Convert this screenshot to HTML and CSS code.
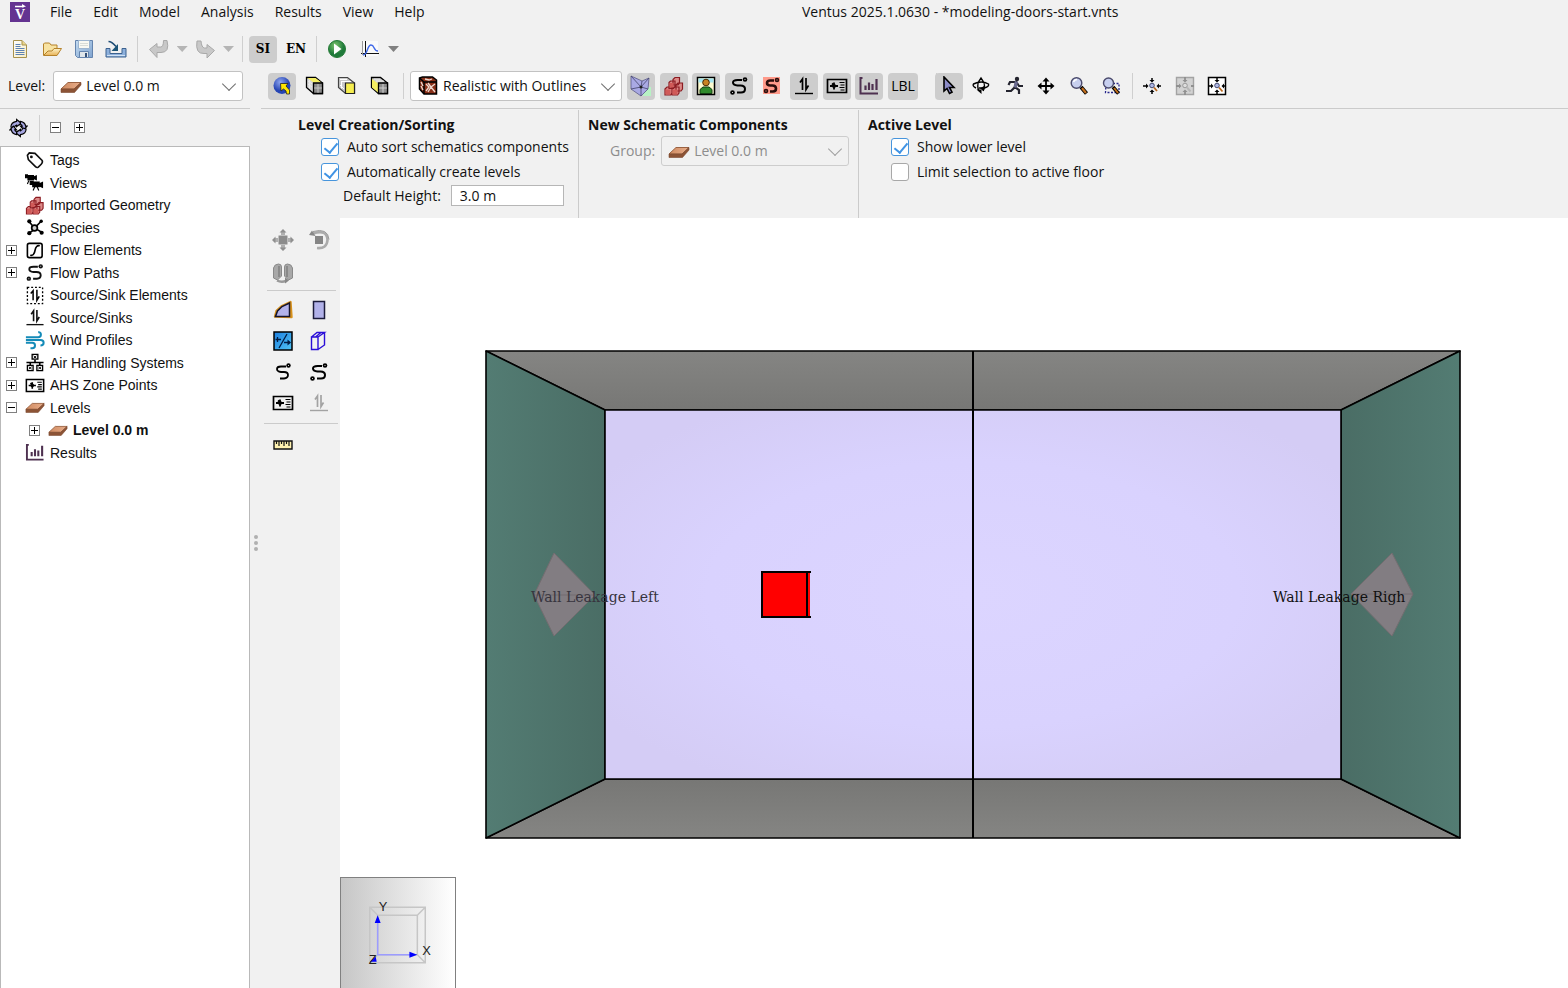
FILE: index.html
```html
<!DOCTYPE html>
<html lang="en">
<head>
<meta charset="utf-8">
<title>Ventus 2025.1.0630 - *modeling-doors-start.vnts</title>
<link rel="stylesheet" href="styles.css">
</head>
<body>
<svg class="sprite" aria-hidden="true">
  <defs>
    <linearGradient id="gPaper" x2="1" y2="1"><stop offset="0" stop-color="#fff"/><stop offset="1" stop-color="#f6ecc4"/></linearGradient>
    <linearGradient id="gFolder" x2="0" y2="1"><stop offset="0" stop-color="#fdf3c8"/><stop offset="1" stop-color="#e8b256"/></linearGradient>
    <linearGradient id="gBlue" x2="1" y2="1"><stop offset="0" stop-color="#c4dcf2"/><stop offset="1" stop-color="#7fa3cf"/></linearGradient>
    <linearGradient id="gWin" x2="1" y2="1"><stop offset="0" stop-color="#1c7fe0"/><stop offset="1" stop-color="#52c4f4"/></linearGradient>
    <linearGradient id="gSlab" x2="1"><stop offset="0" stop-color="#cf8a60"/><stop offset="1" stop-color="#e8ae8b"/></linearGradient>
    <radialGradient id="gBall" cx=".4" cy=".3"><stop offset="0" stop-color="#8fa6ee"/><stop offset="1" stop-color="#2645b4"/></radialGradient>
    <radialGradient id="gRun" cx=".4" cy=".3"><stop offset="0" stop-color="#7cc46c"/><stop offset="1" stop-color="#1f7a3a"/></radialGradient>
  </defs>
  <symbol id="new" viewBox="0 0 20 20"><path d="M3.500 1.500h8.500l4.500 4.500v12.500h-13z" fill="url(#gPaper)" stroke="#a8924c"/><path d="M12 1.500v4.500h4.500" fill="#ecd68a" stroke="#a8924c"/><path d="M5.500 5.500h5M5.500 7.500h5M5.500 9.500h9M5.500 11.500h9M5.500 13.500h9M5.500 15.500h9" stroke="#5d82b4"/></symbol>
  <symbol id="open" viewBox="0 0 20 20"><path d="M1.500 16V5l1-1h5l1.500 2h6v3" fill="#f8e3a2" stroke="#b5822a"/><path d="M1.500 16.500L6 12h4l2-2.500h7.500l-4.500 7z" fill="url(#gFolder)" stroke="#b5822a"/></symbol>
  <symbol id="save" viewBox="0 0 20 20"><path d="M1.500 1.500h17v17h-15l-2-2z" fill="url(#gBlue)" stroke="#6484ae"/><path d="M4.500 1.500h11v8h-11z" fill="#f8f8f2" stroke="#9cb4cf"/><path d="M6 4.500h8M6 6.500h8" stroke="#d8dcd8"/><path d="M5.500 12.500h9v6h-9z" fill="#dfe5ea" stroke="#6484ae"/><path d="M11 14h2v4h-2z" fill="#345078"/></symbol>
  <symbol id="import" viewBox="0 0 22 20"><path d="M1 9.500h4v5h12v-5h4v8.500H1z" fill="#8db0dc" stroke="#3c628f"/><path d="M2 16.500h18" stroke="#d0e2f4"/><path d="M3.500 2.500c3 0 5 2 7.500 5" fill="none" stroke="#1d4b74" stroke-width="1.500"/><path d="M13 5v7H6.500z" fill="#1d5577"/></symbol>
  <symbol id="undo" viewBox="0 0 20 20"><path d="M.5 10.500L8 4.500v3.500h3.500q3 0 3-6.500h3.500q3 12-6 12H8v5z" fill="#c8c8c8" stroke="#a9a9a9"/></symbol>
  <symbol id="redo" viewBox="0 0 20 20"><path d="M19.500 11.500L12 5.500v3.500H9.500q-3-.5-3.500-7H2q-2 13 7 12.500h3v4.500z" fill="#c8c8c8" stroke="#a9a9a9"/></symbol>
  <symbol id="run" viewBox="0 0 20 20"><circle cx="10" cy="10" r="8.500" fill="url(#gRun)" stroke="#247a36"/><path d="M7 4.500l7.500 5.500L7 15.500z" fill="#fff"/></symbol>
  <symbol id="graph" viewBox="0 0 20 20"><path d="M3 2h15v15H3z" fill="#fafafa"/><path d="M5.500 2v16M1 14.500h18" stroke="#111"/><path d="M2.500 2v14" stroke="#999"/><path d="M3 16c5 0 4-10 8-10s2 6 7 6" fill="none" stroke="#3f68e8" stroke-width="1.400"/></symbol>
  <symbol id="slab" viewBox="0 0 22 12"><path d="M1 8L8 1.500h13L14 8z" fill="url(#gSlab)" stroke="#9a6242"/><path d="M1 8h13l7-6.500v2.500L14.500 11.500H1z" fill="#8c5335" stroke="#7c4a30" stroke-width=".6"/></symbol>

  <symbol id="ball" viewBox="0 0 20 20"><circle cx="10" cy="9.500" r="8.500" fill="url(#gBall)"/><path d="M8.500 7.500h7.500l-2 2.500 3.500 4v4h-3l-.5-3-2.500-2-2.500 2z" fill="#ffe600" stroke="#222" stroke-width=".8"/></symbol>
  <symbol id="cubeTop" viewBox="0 0 20 20"><path d="M1.500 1.500h9l7 5.500v10.500h-9l-7-6z" fill="#d8d8d8" stroke="#000" stroke-width="1.300"/><path d="M2.500 2h8l6 4.500H8.500z" fill="#f4ee62"/><path d="M8.500 7h9v10.500h-9z" fill="#8a8a8a" stroke="#000" stroke-width="1.300"/><path d="M3 5l4 3M3 8l4 3M4.500 4v8.500M13 8v9M9 12h8" stroke="#fff" opacity=".5"/></symbol>
  <symbol id="cubeFront" viewBox="0 0 20 20"><path d="M1.500 1.500h9l7 5.500v10.500h-9l-7-6z" fill="#cacaca" stroke="#444" stroke-width="1.200"/><path d="M8.500 7h9v10.500h-9z" fill="#f6ee50" stroke="#222" stroke-width="1.200"/><path d="M3 3.500h7M5 5.500h9M3 9l4 4M4.500 5v7.500" stroke="#fff"/></symbol>
  <symbol id="cubeSide" viewBox="0 0 20 20"><path d="M1.500 1.500h9l7 5.500v10.500h-9l-7-6z" fill="#d0d0d0" stroke="#000" stroke-width="1.300"/><path d="M2 3l6 4.500v9l-6-5z" fill="#f4ee62"/><path d="M8.500 7h9v10.500h-9z" fill="#8c8c8c" stroke="#000" stroke-width="1.300"/><path d="M4 3h6M6 5h8M13 8v9M9 12h8" stroke="#fff" opacity=".6"/></symbol>
  <symbol id="cubeReal" viewBox="0 0 20 20"><path d="M1.500 2l3-1h10l4 3v14H6l-4.500-5z" fill="#8a3018" stroke="#000" stroke-width="1.500"/><path d="M1.500 2L6 6h12M6 6v12" fill="none" stroke="#000" stroke-width="1.500"/><path d="M8 8l3 3-3 4M10 7l3 4 4-3M13 11l-3 5M13 11l4 5M7 3l4 1 3-1M3 6l2 4M3 10l2 4" fill="none" stroke="#eed9cf" stroke-width="1.300"/></symbol>

  <symbol id="mesh" viewBox="0 0 22 22"><path d="M12 12h9v9h-8z" fill="#b8f2c4"/><path d="M1 1l11 5 7-3-1 11-7 7L1 14z" fill="#a9a9e4" stroke="#5a5a86" stroke-width=".8"/><path d="M1 1l10 11 8-9M1 14l10-2 7 2M11 12v9M12 6l-1 6" fill="none" stroke="#44446a" stroke-width=".8"/><circle cx="11" cy="12" r="1.500" fill="#222"/></symbol>
  <symbol id="blocks" viewBox="0 0 20 20"><g fill="#dc8a88" stroke="#8c1c22" stroke-width="1.200"><path d="M1 13l2-2h5v6l-1.500 2H1zM8 13l2-2h5v6l-1.500 2H8zM12 9l2-2h4.500v6L17 15h-5zM5 6.500L6.500 5H11v6l-1.500 1.500H5zM9 3.500L11 1.500h4.500V7L14 9H9z"/></g><path d="M1.500 13.500h5v5h-5zM8.500 13.500h5v5h-5zM5.500 7h4v4.500h-4z" fill="#d05a58"/></symbol>
  <symbol id="person" viewBox="0 0 20 20"><path d="M1.500 1.500h17v17h-17z" fill="#fdfbd0" stroke="#000" stroke-width="1.500"/><path d="M2.500 2.500h15v4h-15z" fill="#a4e6f2"/><circle cx="10" cy="6.500" r="3.300" fill="#c98322" stroke="#4a2a04"/><path d="M4 17.500v-4l3-2.500h6l3 2.500v4z" fill="#2f8a2b" stroke="#143c12"/></symbol>
  <symbol id="path2" viewBox="0 0 20 20"><path d="M13 4H8.500Q4 4 4 6.500T8.500 9.500h3q4.500 0 4.500 3.500t-4 3.500H8" fill="none" stroke="currentColor" stroke-width="2"/><circle cx="16" cy="3.500" r="2.300" fill="currentColor"/><circle cx="3.500" cy="16.500" r="2.300" fill="currentColor"/><path d="M15.500 3h1v1h-1zM3 16h1v1H3z" fill="#ccc"/></symbol>
  <symbol id="path1" viewBox="0 0 20 20"><path d="M13 4.500H8q-4 0-4 2.500t4 3h3q4 0 4 3t-4 3.500H7" fill="none" stroke="#000" stroke-width="1.800"/><circle cx="15.500" cy="3.500" r="2.200" fill="#000"/><path d="M15 3h1v1h-1z" fill="#ccc"/></symbol>
  <symbol id="pathRed" viewBox="0 0 20 20"><path d="M1 1h17v17H1z" fill="#ff9a8a"/><path d="M12 4.500H8.500q-3.500 0-3.500 2.500t3.500 2.500h2q3.500 0 3.500 3t-3 3H8" fill="none" stroke="#2a0d0b" stroke-width="2.600"/><circle cx="15" cy="4" r="2.300" fill="#2a0d0b"/><circle cx="4" cy="15" r="2.300" fill="#2a0d0b"/><path d="M14.500 3.500h1v1h-1zM3.500 14.500h1v1h-1z" fill="#ff9a8a"/></symbol>
  <symbol id="sink" viewBox="0 0 20 20"><path d="M1 17.500h18" stroke="currentColor" stroke-width="1.400"/><path d="M8.500 14V3L6 6.500M12 2v11.500l2.500-4" fill="none" stroke="currentColor" stroke-width="1.700"/></symbol>
  <symbol id="sinkBox" viewBox="0 0 20 20"><path d="M2 1.500h16v17H2z" fill="none" stroke="#000" stroke-width="1.400" stroke-dasharray="2 2"/><path d="M8 15V5L5.500 8M12 4v11l2.500-4" fill="none" stroke="#000" stroke-width="1.600"/></symbol>
  <symbol id="ahs" viewBox="0 0 22 18"><path d="M1.500 2.500h19v13h-19z" fill="none" stroke="#000" stroke-width="1.700"/><path d="M4 9h8M8 5.500v7M6 6.500l3 2.500" stroke="#000" stroke-width="1.800"/><circle cx="8" cy="9" r="2" fill="#000"/><path d="M13.500 5.500h5M14.500 8h4M13.500 10.500h5M14.500 13h4" stroke="#000" stroke-width="1.200"/></symbol>
  <symbol id="bars" viewBox="0 0 20 20"><path d="M3.500 2H1.500v15.500H19" fill="none" stroke="#4e3150" stroke-width="2"/><path d="M6.500 14V9.500M10 14V6.500M13.500 14V8M17.500 14V3" stroke="#4e3150" stroke-width="2.200"/></symbol>

  <symbol id="pointer" viewBox="0 0 20 20"><path d="M5 1v14l3-2.500 2.500 5 2.500-1.300-2.500-4.700H15z" fill="#8c8cc8" stroke="#000" stroke-width="1.600"/></symbol>
  <symbol id="orbit" viewBox="0 0 20 20"><g fill="none" stroke="#000" stroke-width="1.400"><path d="M8 15Q5.500 10 8 5l2-3 2 3q3 5 0 10M5 12Q1 10 2.500 8q8-4 15 0 1 2.500-4 4H8"/></g><path d="M5.500 13.500h5V18zM13 10v5l-4-2.500z" fill="#000"/></symbol>
  <symbol id="walk" viewBox="0 0 20 20"><path d="M12.500 5l-1.500 6 4 3v4M11 11l-4 4H2M11 6H6L4.500 9M13 7l2 3h4" fill="none" stroke="#23232e" stroke-width="2.200"/><path d="M12.500 5.500l-1.500 6" stroke="#6b6b90" stroke-width="3.200"/><circle cx="13" cy="3" r="2.200" fill="#23232e"/></symbol>
  <symbol id="pan" viewBox="0 0 20 20"><path d="M10 3v14M3 10h14" stroke="#000" stroke-width="1.800"/><path d="M10 1.500l3.500 4h-7zM10 18.500l3.500-4h-7zM1.500 10l4-3.500v7zM18.500 10l-4-3.500v7z" fill="#000"/></symbol>
  <symbol id="zoom" viewBox="0 0 20 20"><path d="M12 11l5.500 6.500" stroke="#000" stroke-width="4"/><path d="M13 12l4 5" stroke="#c4701e" stroke-width="2.200"/><circle cx="7.500" cy="7" r="5.300" fill="#c7cfef" stroke="#4a4a6c" stroke-width="1.400"/><path d="M4.500 6q1-2.500 3.500-2.500" fill="none" stroke="#fff" stroke-width="1.500"/></symbol>
  <symbol id="zoomBox" viewBox="0 0 20 20"><path d="M5 7.500h13v9H4.500z" fill="none" stroke="#26268c" stroke-width="1.300" stroke-dasharray="2 1.500"/><path d="M12 11l5.500 6.500" stroke="#000" stroke-width="3.600"/><path d="M13 12l4 5" stroke="#c4701e" stroke-width="2"/><circle cx="7.500" cy="7" r="5" fill="#c7cfef" stroke="#4a4a6c" stroke-width="1.400"/></symbol>
  <symbol id="fit" viewBox="0 0 20 20"><path d="M10 2v3M10 15v3M1 10h4M16 10h3" stroke="#000" stroke-width="1.500"/><path d="M10 6.500L7.500 4h5zM10 13.500L7.500 16h5zM6.500 10L4 7.500v5zM14.500 10L17 7.500v5z" fill="#000"/><circle cx="10" cy="9.500" r="2.300" fill="#b0b8e4" stroke="#444a70"/><path d="M12 11.500l3 3.500" stroke="#b8661c" stroke-width="1.800"/></symbol>
  <symbol id="fitBox" viewBox="0 0 20 20"><path d="M1.500 1.500h17v17h-17z" fill="#fff" stroke="#000" stroke-width="1.500"/><path d="M10 1v4M10 15v4M1 10h4M16 10h3" stroke="#000" stroke-width="1.500"/><path d="M10 6.500L7.500 4h5zM10 13.500L7.500 16h5zM6.500 10L4 7.500v5zM14.500 10L17 7.500v5z" fill="#000"/><circle cx="10" cy="9.500" r="2.300" fill="#b0b8e4" stroke="#444a70"/><path d="M12 11.500l3.500 4" stroke="#b8661c" stroke-width="1.800"/></symbol>
  <symbol id="fitOff" viewBox="0 0 20 20"><path d="M1.500 1.500h17v17h-17z" fill="#d2d2d2" stroke="#a3a3a3" stroke-width="1.400"/><path d="M10 1v4M10 15v4M1 10h4M16 10h3" stroke="#909090" stroke-width="1.800"/><path d="M10 6.500L7.500 4h5zM10 13.500L7.500 16h5zM6.500 10L4 7.500v5z" fill="#909090"/><circle cx="10" cy="9.500" r="2.300" fill="#ddd" stroke="#999"/><path d="M12 11.500l3.500 4" stroke="#b8b8b8" stroke-width="2"/></symbol>

  <symbol id="sync" viewBox="0 0 20 20"><path d="M2 9q0-5 6-6V1l5 4-5 3.500V7q-2 .5-2.500 3z" fill="#a6a6e0" stroke="#000" stroke-width="1.200"/><path d="M12 3q5 1 5.500 5H19l-3.500 4L12 8h2q-.5-1.500-2-2z" fill="#a6a6e0" stroke="#000" stroke-width="1.200"/><path d="M18 11q0 5-6 6v2l-5-4 5-3.500V13q2-.5 2.500-3z" fill="#a6a6e0" stroke="#000" stroke-width="1.200"/><path d="M8 17q-5-1-5.500-5H1l3.500-4L8 12H6q.5 1.500 2 2z" fill="#a6a6e0" stroke="#000" stroke-width="1.200"/></symbol>
  <symbol id="tag" viewBox="0 0 20 20"><path d="M2 4.500L4 2l6 .5 7.500 7.500q1 1.500-1 4l-3 3q-1.500 1-3-.5L3 9z" fill="#fff" stroke="#111" stroke-width="1.700"/><circle cx="6.200" cy="6.200" r="1.500" fill="#111"/></symbol>
  <symbol id="cams" viewBox="0 0 20 20"><path d="M2 2h7v1.500l3-1.500v6l-3-1.500V8H2zM7 9h8v1.500l3.500-1.500v7L15 14.500V15H7z" fill="#000"/><path d="M0 2h2v3H0zM5 9h3v3H5zM3.500 8L2 11.500M10 14l-2 4.500M12 14l2 4.500" stroke="#000" stroke-width="1.200"/></symbol>
  <symbol id="species" viewBox="0 0 20 20"><path d="M4 4l4 5M16 4l-4 4M4 16l4-3M12 12l5 3" stroke="#000" stroke-width="1.700"/><circle cx="9.500" cy="10.500" r="3" fill="#ccc" stroke="#000" stroke-width="1.800"/><circle cx="4" cy="3.500" r="2.200"/><circle cx="16.500" cy="3.500" r="1.800"/><circle cx="4" cy="16" r="2.200"/><circle cx="17" cy="15.500" r="2.200"/></symbol>
  <symbol id="flowEl" viewBox="0 0 20 20"><rect x="2" y="2.500" width="15.500" height="15" rx="2" fill="#fff" stroke="#000" stroke-width="1.700"/><path d="M5 15q4 1 5-5t5-5" fill="none" stroke="#000" stroke-width="1.700"/></symbol>
  <symbol id="wind" viewBox="0 0 22 20"><path d="M1 6.500h13.500q3 0 3-3T14.500 1M1 9.500h16q3.500 0 3.500 3t-3.500 3M1 12.500h7q3 0 3 3T8 18.500H6" fill="none" stroke="#148bb8" stroke-width="2.200"/></symbol>
  <symbol id="net" viewBox="0 0 20 20"><path d="M1 10h18M10 7v3M5 10v3M15 10v3" stroke="#000" stroke-width="1.700"/><g fill="#fff" stroke="#000" stroke-width="1.400"><path d="M7 1.500h6v5H7zM2 13h6v5.500H2zM12 13h6v5.500h-6z"/><path d="M8.500 3l3 2.500M11.500 3l-3 2.500M3.500 14.500l3 2.500M6.500 14.500l-3 2.500M13.500 14.500l3 2.500M16.500 14.500l-3 2.500" stroke-width="1"/></g></symbol>

  <symbol id="move" viewBox="0 0 22 22"><path d="M6.500 6.500h9v9h-9z" fill="#8c8c8c"/><path d="M9 2h4v4H9zM9 16h4v4H9zM2 9h4v4H2zM16 9h4v4h-4z" fill="#b0b0b0"/><path d="M11 0l3.500 3.500h-7zM11 22l3.500-3.500h-7zM0 11l3.500-3.500v7zM22 11l-3.500-3.500v7z" fill="#909090"/></symbol>
  <symbol id="rotate" viewBox="0 0 22 22"><path d="M7 7h8v8H7z" fill="#858585"/><path d="M5 4.500q14-4.500 14.500 6.500Q19 20 9 19" fill="none" stroke="#ababab" stroke-width="2.600"/><path d="M5 2.500q15-4 16 8" fill="none" stroke="#999"/><path d="M1 6l3-4.500L7.500 7z" fill="#888"/></symbol>
  <symbol id="mirror" viewBox="0 0 22 22"><path d="M1.500 16V6q1-4 5-4 3 0 3 3v9l-4 4zM20.500 16V6q-1-4-5-4-3 0-3 3v9l4 4z" fill="#a8a8a8" stroke="#8a8a8a"/><path d="M7 4v11M15 4v11" stroke="#808080" stroke-width="1.500"/><path d="M5 18.500q4 2 9 .5" fill="none" stroke="#999" stroke-width="2.500"/><path d="M13 15.500l4 3-4 3z" fill="#888"/></symbol>
  <symbol id="poly" viewBox="0 0 20 20"><path d="M2 16.500L3.500 11 9 6l8.500-4 1 15z" fill="#aeaee6" stroke="#d8921c" stroke-width="2.400" stroke-linejoin="round"/><path d="M2.500 16.500L4.500 11 9 6.500 16.500 3v13.500z" fill="#b2b2ea" stroke="#14142c" stroke-width="1.500"/></symbol>
  <symbol id="rect" viewBox="0 0 20 20"><path d="M4.500 1.500h11v17h-11z" fill="#b2b2ea" stroke="#1c1c3c" stroke-width="1.500"/></symbol>
  <symbol id="opening" viewBox="0 0 20 20"><path d="M1 1h18v18H1z" fill="url(#gWin)" stroke="#000" stroke-width="1.500"/><path d="M6 17L14 3M2.500 8.500H8M4.500 6v5M11 11.500h6" stroke="#001c44" stroke-width="1.300"/><path d="M14.500 8.500L18 11.500l-3.500 3z" fill="#001c44"/></symbol>
  <symbol id="door" viewBox="0 0 20 20"><path d="M2.500 6h6.500v12.500H2.500zM2.500 6L8 1.500h7.500L9 6M15.500 1.500V14L9 18.500M6.500 6L12 1.500" fill="none" stroke="#2a0ed8" stroke-width="1.400"/></symbol>
  <symbol id="ruler" viewBox="0 0 20 10"><path d="M1 1h18v8H1z" fill="#fff2b0" stroke="#111" stroke-width="1.400"/><path d="M3.500 1v3M6 1v5M8.500 1v3M11 1v5M13.500 1v3M16 1v5" stroke="#111" stroke-width="1.200"/></symbol>
</svg>

<header class="menubar">
  <svg class="logo" viewBox="0 0 20 20" role="img" aria-label="Ventus"><path d="M0 0h20v20H0z" fill="#643391"/><path d="M5 4.500h9" stroke="#fff" stroke-width="1.500"/><path d="M12 2l4 2.500-4 1z" fill="#fff"/><text class="logo-letter" x="10" y="17" text-anchor="middle">V</text></svg>
  <nav class="menus">
    <button>File</button><button>Edit</button><button>Model</button><button>Analysis</button><button>Results</button><button>View</button><button>Help</button>
  </nav>
  <h1 class="title">Ventus 2025.1.0630 - *modeling-doors-start.vnts</h1>
</header>

<div class="toolbar main-tools" role="toolbar" aria-label="Main">
  <div class="group file-group">
    <button class="tool" aria-label="New"><svg><use href="#new"/></svg></button>
    <button class="tool" aria-label="Open"><svg><use href="#open"/></svg></button>
    <button class="tool" aria-label="Save"><svg><use href="#save"/></svg></button>
    <button class="tool" aria-label="Import"><svg class="wide"><use href="#import"/></svg></button>
  </div>
  <span class="sep"></span>
  <div class="group undo-group">
    <button class="tool" aria-label="Undo" disabled><svg><use href="#undo"/></svg></button>
    <button class="caret faint" aria-label="Undo history" disabled></button>
    <button class="tool" aria-label="Redo" disabled><svg><use href="#redo"/></svg></button>
    <button class="caret faint" aria-label="Redo history" disabled></button>
  </div>
  <span class="sep"></span>
  <div class="group unit-group">
    <button class="tool unit on">SI</button>
    <button class="tool unit">EN</button>
  </div>
  <span class="sep"></span>
  <div class="group run-group">
    <button class="tool" aria-label="Run"><svg><use href="#run"/></svg></button>
    <button class="tool" aria-label="Plots"><svg><use href="#graph"/></svg></button>
    <button class="caret" aria-label="More plots"></button>
  </div>
</div>

<div class="toolbar view-tools" role="toolbar" aria-label="View">
  <div class="level-pick">
    <label for="level">Level:</label>
    <span class="combo level-combo"><svg class="slab"><use href="#slab"/></svg><select id="level"><option>Level 0.0 m</option></select></span>
  </div>
  <div class="group cube-group">
    <button class="tool on" aria-label="Orbit selection"><svg><use href="#ball"/></svg></button>
    <button class="tool" aria-label="Top view"><svg><use href="#cubeTop"/></svg></button>
    <button class="tool" aria-label="Front view"><svg><use href="#cubeFront"/></svg></button>
    <button class="tool" aria-label="Side view"><svg><use href="#cubeSide"/></svg></button>
  </div>
  <span class="sep"></span>
  <span class="combo render-combo"><svg class="combo-icon"><use href="#cubeReal"/></svg><select aria-label="Render mode"><option>Realistic with Outlines</option></select></span>
  <div class="group show-group">
    <button class="tool on" aria-label="Show zones"><svg class="wide tall"><use href="#mesh"/></svg></button>
    <button class="tool on" aria-label="Show geometry"><svg><use href="#blocks"/></svg></button>
    <button class="tool on" aria-label="Show occupants"><svg><use href="#person"/></svg></button>
    <button class="tool on" aria-label="Show flow paths"><svg><use href="#path2"/></svg></button>
    <button class="tool" aria-label="Show flow path errors"><svg><use href="#pathRed"/></svg></button>
    <button class="tool on" aria-label="Show sources"><svg><use href="#sink"/></svg></button>
    <button class="tool on" aria-label="Show AHS points"><svg class="wide"><use href="#ahs"/></svg></button>
    <button class="tool on" aria-label="Show results"><svg><use href="#bars"/></svg></button>
    <button class="tool on lbl">LBL</button>
  </div>
  <span class="sep"></span>
  <div class="group nav-group">
    <button class="tool on" aria-label="Select"><svg><use href="#pointer"/></svg></button>
    <button class="tool" aria-label="Orbit"><svg><use href="#orbit"/></svg></button>
    <button class="tool" aria-label="Walk"><svg><use href="#walk"/></svg></button>
    <button class="tool" aria-label="Pan"><svg><use href="#pan"/></svg></button>
    <button class="tool" aria-label="Zoom"><svg><use href="#zoom"/></svg></button>
    <button class="tool" aria-label="Zoom box"><svg><use href="#zoomBox"/></svg></button>
  </div>
  <span class="sep"></span>
  <div class="group fit-group">
    <button class="tool" aria-label="Fit all"><svg><use href="#fit"/></svg></button>
    <button class="tool" aria-label="Fit selection" disabled><svg><use href="#fitOff"/></svg></button>
    <button class="tool" aria-label="Fit view"><svg><use href="#fitBox"/></svg></button>
  </div>
</div>

<div class="workspace">
  <aside class="sidebar">
    <div class="tree-tools">
      <button class="sync" aria-label="Synchronize"><svg><use href="#sync"/></svg></button>
      <span class="sep"></span>
      <button class="toggle" aria-label="Collapse all"></button>
      <button class="toggle plus" aria-label="Expand all"></button>
    </div>
    <div class="tree-box">
      <ul class="tree" role="tree">
        <li role="treeitem"><span class="slot"></span><svg><use href="#tag"/></svg>Tags</li>
        <li role="treeitem"><span class="slot"></span><svg><use href="#cams"/></svg>Views</li>
        <li role="treeitem"><span class="slot"></span><svg><use href="#blocks"/></svg>Imported Geometry</li>
        <li role="treeitem"><span class="slot"></span><svg><use href="#species"/></svg>Species</li>
        <li role="treeitem"><button class="toggle plus" aria-label="Expand"></button><svg><use href="#flowEl"/></svg>Flow Elements</li>
        <li role="treeitem"><button class="toggle plus" aria-label="Expand"></button><svg><use href="#path2"/></svg>Flow Paths</li>
        <li role="treeitem"><span class="slot"></span><svg><use href="#sinkBox"/></svg>Source/Sink Elements</li>
        <li role="treeitem"><span class="slot"></span><svg><use href="#sink"/></svg>Source/Sinks</li>
        <li role="treeitem"><span class="slot"></span><svg><use href="#wind"/></svg>Wind Profiles</li>
        <li role="treeitem"><button class="toggle plus" aria-label="Expand"></button><svg><use href="#net"/></svg>Air Handling Systems</li>
        <li role="treeitem"><button class="toggle plus" aria-label="Expand"></button><svg><use href="#ahs"/></svg>AHS Zone Points</li>
        <li role="treeitem"><button class="toggle" aria-label="Collapse"></button><svg><use href="#slab"/></svg>Levels</li>
        <li role="treeitem" aria-level="2" class="child"><button class="toggle plus" aria-label="Expand"></button><svg><use href="#slab"/></svg>Level 0.0 m</li>
        <li role="treeitem"><span class="slot"></span><svg><use href="#bars"/></svg>Results</li>
      </ul>
    </div>
  </aside>
  <div class="splitter"><i></i><i></i><i></i></div>
  <main class="editor">
    <div class="props">
      <section class="prop sorting">
        <h2>Level Creation/Sorting</h2>
        <label class="check"><input type="checkbox" checked>Auto sort schematics components</label>
        <label class="check"><input type="checkbox" checked>Automatically create levels</label>
        <div class="field"><label for="height">Default Height:</label><input id="height" type="text" value="3.0 m"></div>
      </section>
      <section class="prop schematic">
        <h2>New Schematic Components</h2>
        <div class="field off"><label for="group">Group:</label><span class="combo group-combo"><svg class="slab"><use href="#slab"/></svg><select id="group" disabled><option>Level 0.0 m</option></select></span></div>
      </section>
      <section class="prop active">
        <h2>Active Level</h2>
        <label class="check"><input type="checkbox" checked>Show lower level</label>
        <label class="check"><input type="checkbox">Limit selection to active floor</label>
      </section>
    </div>
    <div class="stage">
      <div class="palette" role="toolbar" aria-label="Drawing">
        <div class="pair-grid">
          <button class="tool" aria-label="Move" disabled><svg class="wide tall"><use href="#move"/></svg></button>
          <button class="tool" aria-label="Rotate" disabled><svg class="wide tall"><use href="#rotate"/></svg></button>
          <button class="tool" aria-label="Mirror" disabled><svg class="wide tall"><use href="#mirror"/></svg></button>
        </div>
        <hr>
        <div class="pair-grid draw">
          <button class="tool" aria-label="Polygon zone"><svg><use href="#poly"/></svg></button>
          <button class="tool" aria-label="Rectangle zone"><svg><use href="#rect"/></svg></button>
          <button class="tool" aria-label="Opening"><svg><use href="#opening"/></svg></button>
          <button class="tool" aria-label="Door"><svg><use href="#door"/></svg></button>
          <button class="tool" aria-label="Flow path"><svg><use href="#path1"/></svg></button>
          <button class="tool" aria-label="Two point flow path"><svg><use href="#path2"/></svg></button>
          <button class="tool" aria-label="AHS point"><svg class="wide"><use href="#ahs"/></svg></button>
          <button class="tool dim" aria-label="Source" disabled><svg><use href="#sink"/></svg></button>
        </div>
        <hr class="full">
        <div class="pair-grid measure">
          <button class="tool" aria-label="Measure"><svg><use href="#ruler"/></svg></button>
        </div>
      </div>
      <div class="viewport">
        <svg class="scene" viewBox="0 0 1228 770" role="img" aria-label="Level 0.0 m model, top view">
          <defs>
            <radialGradient id="gFloor" cx=".5" cy=".5" r=".6"><stop offset="0" stop-color="#dcd5ff"/><stop offset=".6" stop-color="#d9d2fe"/><stop offset="1" stop-color="#d4ccf5"/></radialGradient>
            <linearGradient id="gLeft"><stop offset="0" stop-color="#537c73"/><stop offset="1" stop-color="#4a6d65"/></linearGradient>
            <linearGradient id="gRight"><stop offset="0" stop-color="#4a6d65"/><stop offset="1" stop-color="#537c73"/></linearGradient>
            <linearGradient id="gTop" x2="0" y2="1"><stop offset="0" stop-color="#858583"/><stop offset="1" stop-color="#777775"/></linearGradient>
            <linearGradient id="gBottom" x2="0" y2="1"><stop offset="0" stop-color="#777775"/><stop offset="1" stop-color="#858583"/></linearGradient>
          </defs>
          <g stroke="#000" stroke-width="1.600" stroke-linejoin="round">
            <path d="M146 133H1120L1001 192H265z" fill="url(#gTop)"/>
            <path d="M146 620H1120L1001 561H265z" fill="url(#gBottom)"/>
            <path d="M146 133L265 192V561L146 620z" fill="url(#gLeft)"/>
            <path d="M1120 133L1001 192V561L1120 620z" fill="url(#gRight)"/>
            <path d="M265 192H1001V561H265z" fill="url(#gFloor)"/>
            <path d="M633 133V620" stroke-width="2"/>
          </g>
          <path d="M422 354h48v45h-48z" fill="#f00"/>
          <path d="M471 354H422V399H471M467 354v45" fill="none" stroke="#000" stroke-width="2"/>
          <g fill="#827d82" stroke="#736d70">
            <path d="M214 335L255 377L214 418L194 377z"/><path d="M194 377h61"/>
            <path d="M1052 335L1073 376L1052 418L1011 376z"/><path d="M1011 376h62"/>
          </g>
          <text class="scene-label soft" x="191" y="384">Wall Leakage Left</text>
          <text class="scene-label" x="933" y="384">Wall Leakage Righ</text>
        </svg>
        <svg class="axes" viewBox="0 0 115 110" role="img" aria-label="Axes">
          <g fill="none" stroke="#c6c6c6" stroke-width="1.500"><path d="M29 29h56v56H29zM37 37h40v40H37zM29 29l8 8M85 29l-8 8M85 85l-8-8M29 85l8-8"/></g>
          <path d="M37 44v33h33" fill="none" stroke="#9c9cff" stroke-width="1.500"/>
          <path d="M37 37l3 8h-6zM77 77l-8-3v6zM29 84l6-5 1 5z" fill="#00f"/>
          <text class="axis" x="38" y="33">Y</text><text class="axis" x="82" y="77">X</text><text class="axis" x="28" y="86">Z</text>
        </svg>
      </div>
    </div>
  </main>
</div>
</body>
</html>
```
FILE: styles.css
```css
* { box-sizing: border-box; }

body {
  margin: 0;
  min-height: 100vh;
  display: flex;
  flex-direction: column;
  background: #f1f1f1;
  color: #111;
  font: 14px/20px "Open Sans", "Noto Sans", sans-serif;
}

button, input, select { font: inherit; color: inherit; }
button { border: 0; padding: 0; background: none; }
h1, h2 { margin: 0; font-size: 14px; line-height: 20px; }
svg { display: block; flex: none; }
.sprite { position: absolute; width: 0; height: 0; }

.menubar { display: flex; align-items: center; height: 24px; padding-left: 10px; }
.logo { width: 20px; height: 20px; }
.logo-letter { font: bold 14px "Liberation Serif", serif; fill: #fff; }
.menus { display: flex; gap: 21px; margin-left: 20px; }
.title { flex: 1; padding-right: 72px; text-align: center; font-weight: normal; white-space: nowrap; }

.toolbar { display: flex; align-items: center; }
.main-tools { height: 48px; padding-left: 6px; margin-top: 1px; }
.view-tools { height: 30px; margin: -2px 0 7px; }
.group { display: flex; align-items: center; justify-content: space-between; flex: none; }
.tool { display: grid; place-items: center; width: 28px; height: 27px; border-radius: 4px; color: #000; }
.tool svg { width: 20px; height: 20px; }
.tool svg.wide { width: 22px; }
.tool svg.tall { height: 22px; }
.on { background: #cdcdcd; }
.sep { width: 1px; height: 26px; background: #cfcfcf; flex: none; }

.file-group { width: 124px; margin-right: 7px; }
.undo-group { width: 89px; margin: 0 8px 0 7px; }
.unit-group { width: 61px; margin: 0 6px; }
.run-group { width: 76px; margin-left: 6px; }
.unit { font: bold 12px "DejaVu Serif", serif; }
.caret { width: 11px; height: 6px; background: #808080; clip-path: polygon(0 0, 100% 0, 50% 100%); }
.caret.faint { background: #b5b5b5; }

.level-pick { display: flex; align-items: center; width: 268px; padding-left: 8px; gap: 8px; flex: none; }
.combo { position: relative; display: block; height: 30px; flex: none; }
.combo select {
  width: 100%; height: 100%; padding: 0 26px 0 32px;
  appearance: none; background: #fff; border: 1px solid #c2c2c2; border-radius: 3px;
}
.combo::after {
  content: ""; position: absolute; right: 9px; top: 8px; width: 9px; height: 9px;
  border: solid #707070; border-width: 0 1px 1px 0; transform: rotate(45deg);
}
.combo svg { position: absolute; pointer-events: none; }
.slab { left: 7px; top: 10px; width: 22px; height: 12px; }
.combo-icon { left: 8px; top: 5px; width: 20px; height: 20px; }
.level-combo { width: 190px; }
.cube-group { width: 126px; margin-right: 9px; }
.render-combo { width: 212px; margin: 0 5px 0 6px; }
.show-group { width: 291px; margin-right: 18px; }
.show-group .lbl { width: 30px; }
.nav-group { width: 190px; margin-right: 7px; margin-left: -2px; }
.fit-group { width: 93px; margin-left: 5px; }

.workspace { flex: 1; display: flex; }
.sidebar { display: flex; flex-direction: column; width: 250px; border-top: 1px solid #cbcbcb; }
.tree-tools { display: flex; align-items: center; height: 37px; padding-left: 9px; gap: 13px; }
.sync svg { width: 19px; height: 20px; }
.tree-tools .sep { margin-left: -2px; margin-right: -3px; }
.toggle {
  width: 11px; height: 11px; border: 1px solid #808080; flex: none;
  background: linear-gradient(#000, #000) center / 7px 1px no-repeat #fff;
}
.toggle.plus {
  background: linear-gradient(#000, #000) center / 7px 1px no-repeat,
    linear-gradient(#000, #000) center / 1px 7px no-repeat #fff;
}
.tree-box { flex: 1; background: #fff; border: solid #b9b9b9; border-width: 1px 1px 0 1px; }
.tree {
  display: flex; flex-direction: column; height: 315px;
  margin: 2px 0 0; padding: 0 0 0 5px; list-style: none;
  font: 14px/20px "Liberation Sans", Arial, sans-serif;
}
.tree li { flex: 1; display: flex; align-items: center; }
.tree svg { width: 20px; height: 19px; margin: 0 5px 0 8px; }
.slot { width: 11px; }
.tree .child { padding-left: 23px; font-weight: bold; }

.splitter { display: flex; flex-direction: column; justify-content: center; align-items: center; gap: 2px; width: 11px; padding-bottom: 11px; }
.splitter i { width: 4px; height: 4px; border-radius: 50%; background: #b0b0b0; }

.editor { flex: 1; display: flex; flex-direction: column; min-width: 0; border-top: 1px solid #cbcbcb; }
.props { display: flex; height: 109px; padding-top: 1px; }
.prop { padding-top: 5px; white-space: nowrap; }
.prop + .prop { border-left: 1px solid #cbcbcb; padding-left: 9px; }
.sorting { width: 317px; padding-left: 37px; }
.schematic { width: 280px; }
.check { display: flex; align-items: center; gap: 8px; height: 25px; margin-left: 23px; }
.check input {
  position: relative; appearance: none; width: 18px; height: 18px; margin: 0;
  border: 1px solid #a8a8a8; border-radius: 3px; background: #fff;
}
.check input:checked { border-color: #4795dc; }
.check input:checked::after {
  content: ""; position: absolute; left: 5px; top: 1px; width: 6px; height: 11px;
  border: solid #3f93e4; border-width: 0 2px 2px 0; transform: rotate(40deg);
}
.sorting h2, .active h2 { margin-bottom: -1px; }
.field { display: flex; align-items: center; }
.sorting .field { gap: 10px; margin: 1px 0 0 45px; }
.sorting .field input { width: 113px; height: 21px; padding: 0 8px; border: 1px solid #b6b6b6; background: #fff; }
.off { gap: 6px; margin: 1px 0 0 22px; color: #8d8d8d; }
.group-combo { width: 188px; }
.group-combo select { opacity: 1; background: #f1f1f1; border-color: #cdcdcd; }
.group-combo::after { border-color: #a0a0a0; }

.stage { flex: 1; display: flex; }
.palette { width: 79px; padding: 8px 2px 0 3px; }
.pair-grid { display: grid; grid-template-columns: 28px 28px; column-gap: 8px; row-gap: 6px; padding-left: 5px; }
.pair-grid.draw { row-gap: 4px; }
.palette hr { height: 1px; margin: 4px 2px 5px 3px; border: 0; background: #cbcbcb; }
.palette hr.full { margin: 7px 0; }
.tool.dim { color: #a3a3a3; }
.measure svg { height: 10px; }

.viewport { position: relative; flex: 1; background: #fff; min-width: 0; }
.scene { position: absolute; width: 100%; height: 100%; }
.scene-label { font: 14px "DejaVu Serif", serif; fill: #111; }
.scene-label.soft { fill: #37343e; }
.axes {
  position: absolute; left: 0; bottom: 0; width: 116px; height: 111px;
  border: solid #808080; border-width: 1px 1px 0 1px;
  background: linear-gradient(90deg, #c6c6c6, #fff);
}
.axis { font: 13px "Liberation Sans", sans-serif; fill: #222; }
```
